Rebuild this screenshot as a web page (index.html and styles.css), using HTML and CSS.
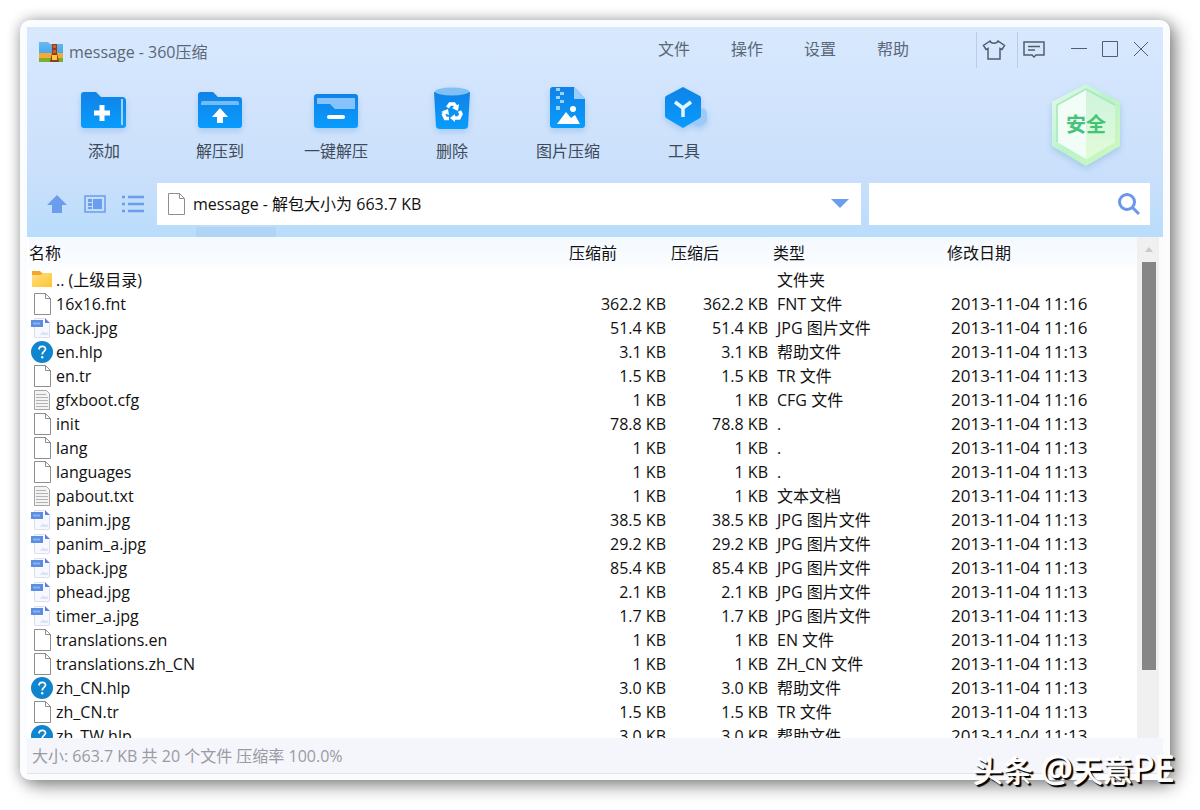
FILE: index.html
```html
<!DOCTYPE html>
<html lang="zh-CN">
<head>
<meta charset="utf-8">
<title>message - 360压缩</title>
<link rel="stylesheet" href="styles.css">
</head>
<body>
<svg class="defs" aria-hidden="true">
  <defs>
    <linearGradient id="blue" x1="0" y1="0" x2="0" y2="1"><stop offset="0" stop-color="#1082e8"/><stop offset="1" stop-color="#089cfc"/></linearGradient>
    <linearGradient id="gold" x1="0" y1="0" x2="1" y2="1"><stop offset="0" stop-color="#ffe08a"/><stop offset="1" stop-color="#ffc42e"/></linearGradient>
    <linearGradient id="rim" x1="0" y1="0" x2="1" y2="1"><stop offset="0" stop-color="#e4fbee"/><stop offset=".5" stop-color="#b9f3c8"/><stop offset="1" stop-color="#d3f8bf"/></linearGradient>
    <linearGradient id="pane" x1="0" y1="0" x2="0" y2="1"><stop offset="0" stop-color="#cdf4dc"/><stop offset="1" stop-color="#e2fbd8"/></linearGradient>
    <linearGradient id="sky" x1="0" y1="0" x2="0" y2="1"><stop offset="0" stop-color="#67b9f2"/><stop offset="1" stop-color="#2e9be8"/></linearGradient>
    <symbol id="i-file" viewBox="0 0 22 24"><path d="M3.500 1.500h11l5 5v16h-16z" fill="#fff" stroke="#8e8e8e"/><path d="M14.500 1.500v5h5" fill="none" stroke="#8e8e8e"/></symbol>
    <symbol id="i-text" viewBox="0 0 22 24"><path d="M3.500 2.500h12l3 3v16h-15z" fill="#f3f3f3" stroke="#a5a5a5"/><path d="M5 6.500h10M5 9.500h12M5 12.500h12M5 15.500h12M5 18.500h12" stroke="#b2b2b2"/></symbol>
    <symbol id="i-jpg" viewBox="0 0 22 24"><path d="M3.500 2.500h10l5 5v14h-15z" fill="#f8f9ff" stroke="#dcdff3"/><path d="M14 2l5 5h-5z" fill="#6b7edc"/><path d="M9 19l3-4 2 2 2-1 2 3z" fill="#dbe2fa"/><rect y="4" width="12" height="7" fill="#5b8ede"/><path d="M2 7.500h7" stroke="#86b2f0" stroke-width="2"/></symbol>
    <symbol id="i-help" viewBox="0 0 22 24"><circle cx="11" cy="12" r="11" fill="#0f84cf"/><path d="M8 9.500c0-4 6.500-4 6.500-.5 0 2.500-3.300 2.500-3.300 5.500" fill="none" stroke="#fff" stroke-width="1.700"/><circle cx="11.200" cy="17.300" r="1.200" fill="#fff"/></symbol>
    <symbol id="i-folder" viewBox="0 0 22 24"><path d="M1 3h8l2 2h10v13H1z" fill="#f5a62c"/><path d="M1 7h9l2-2h9v14H1z" fill="url(#gold)"/></symbol>
  </defs>
</svg>
<main class="window">
  <div class="chrome">
    <header class="titlebar">
      <svg class="appicon" viewBox="0 0 24 20"><path d="M0 0h9l2 2h13v18H0z" fill="url(#sky)"/><path d="M0 11h24v6H0z" fill="#f6a93b"/><path d="M0 16h24v4H0z" fill="#7cae28"/><path d="M13 2h5v9l2 9h-9l2-9z" fill="#8b401d"/><path d="M14 3h3v3h-3zM14 8h3v3h-3z" fill="#dc5926"/><rect x="13" y="13" width="5" height="5" fill="#ffc93c"/></svg>
      <h1>message - 360压缩</h1>
      <nav class="menu"><button>文件</button><button>操作</button><button>设置</button><button>帮助</button></nav>
      <div class="extras">
        <button aria-label="皮肤"><svg viewBox="0 0 24 20" width="24" height="20"><path d="M8 1L1.500 5.500 4 9.500l2-1V19h12V8.500l2 1 2.500-4L16 1c-1 3-7 3-8 0z"/></svg></button>
        <button aria-label="反馈"><svg viewBox="0 0 22 18" width="22" height="18"><path d="M1 1h20v13h-8l-2 2-2-2H1zM5 5.500h12M5 9h7"/></svg></button>
      </div>
      <div class="controls">
        <button aria-label="最小化"><svg viewBox="0 0 16 16"><path d="M0 7.500h16"/></svg></button>
        <button aria-label="最大化"><svg viewBox="0 0 16 16"><path d="M.5.500h15v15H.5z"/></svg></button>
        <button aria-label="关闭"><svg viewBox="0 0 16 16"><path d="M1 1l14 14M15 1L1 15"/></svg></button>
      </div>
    </header>
    <div class="toolbar">
      <button><svg viewBox="0 0 48 48"><path d="M1 8q0-3 3-3h12l5 5h21q4 0 4 4v24q0 3-3 3H4q-3 0-3-3z" fill="url(#blue)"/><path d="M42 12v26" stroke="#9fd3fb" stroke-width="2"/><path d="M14 26h16M22 18v16" stroke="#fff" stroke-width="5"/></svg>添加</button>
      <button><svg viewBox="0 0 48 48"><path d="M2 8q0-3 3-3h12l5 5h21q3 0 3 3v25q0 3-3 3H5q-3 0-3-3z" fill="url(#blue)"/><path d="M5 18v-2q0-2 2-2h34q2 0 2 2v2z" fill="#75bbf7"/><path d="M24 21l8 9h-5v6h-6v-6h-5z" fill="#fff"/></svg>解压到</button>
      <button><svg viewBox="0 0 48 48"><rect x="2" y="7" width="44" height="34" rx="3" fill="url(#blue)"/><path d="M5 11h38v11H23l-5-5H5z" fill="#86c3fa"/><rect x="15" y="28" width="18" height="4" rx="2" fill="#fff"/></svg>一键解压</button>
      <button><svg viewBox="0 0 48 48"><path d="M6 5h36l-2 34q0 3-4 3H12q-4 0-4-3z" fill="url(#blue)"/><ellipse cx="24" cy="4.500" rx="17" ry="4" fill="#82bff5"/><path d="M19.500 20.500l2.500-3.500h4l3 4.500M31.500 24l1.500 3-2 4h-5M21 31.500h-3.500l-2-4 2-3.500" fill="none" stroke="#fff" stroke-width="3.500"/><path d="M31 17l-1 7-6-3zM27 27v8l-5-4zM13 25l7-3 1 6z" fill="#fff"/></svg>删除</button>
      <button><svg viewBox="0 0 48 48"><path d="M6 3q0-3 3-3h21l11 12v26q0 3-3 3H9q-3 0-3-3z" fill="url(#blue)"/><path d="M30 0l11 12H30z" fill="#9ccffb"/><path d="M12 1h4v3h-4zM16 5h4v3h-4zM12 9h4v3h-4zM16 13h4v3h-4zM12 19h4v4h-4z" fill="#9dd2fb"/><path d="M13 37l9-12 5 6 4-3 5 9z" fill="#fff"/><circle cx="29" cy="22" r="3" fill="#fff"/></svg>图片压缩</button>
      <button><svg viewBox="0 0 48 48"><path d="M36 25l8-4 3 4v10l-8 5-8-4z" fill="#9ccbf9"/><path d="M23 0l17 9q1 1 1 2v18q0 1-1 2l-17 10L6 31q-1-1-1-2V11q0-1 1-2z" fill="url(#blue)"/><path d="M15 15l8 6 8-6M23 20v10" fill="none" stroke="#e4f6ff" stroke-width="3.500"/></svg>工具</button>
      <div class="safe"><svg viewBox="0 0 72 84"><path d="M36 1l34 18v44L36 83 2 63V19z" fill="url(#rim)"/><path d="M36 6l29 16v37L36 76 7 59V22z" fill="#f2fdf7"/><path d="M36 6l29 16v37L36 76z" fill="url(#pane)"/><path d="M7 59V22L36 6l29 16" fill="none" stroke="#a5e8bb" stroke-width="1.500"/></svg><span>安全</span></div>
    </div>
    <div class="pathbar">
      <div class="views">
        <button aria-label="上级目录"><svg viewBox="0 0 22 20"><path d="M11 1l10 10h-5v8H6v-8H1z" fill="#6b9ded"/></svg></button>
        <button aria-label="预览"><svg viewBox="0 0 22 20"><path d="M1 2h20v16H1z" fill="none" stroke="#6b9ded" stroke-width="1.500"/><path d="M4 5h4v3H4zM4 9h4v3H4zM4 13h4v2H4zM9 5h9v10H9z" fill="#6b9ded"/></svg></button>
        <button aria-label="列表"><svg viewBox="0 0 22 20"><path d="M0 3h3M0 10h3M0 17h3M6 3h16M6 10h16M6 17h16" stroke="#6b9ded" stroke-width="2.500"/></svg></button>
      </div>
      <label class="address"><svg viewBox="0 0 22 24"><use href="#i-file"/></svg><input type="text" aria-label="路径" value="message - 解包大小为 663.7 KB"><svg class="arrow" viewBox="0 0 18 10"><path d="M0 0h18L9 9z" fill="#6b9cf0"/></svg></label>
      <label class="search"><input type="text" aria-label="搜索"><svg viewBox="0 0 22 22"><circle cx="9" cy="9" r="7.500"/><path d="M14.500 14.500L21 21"/></svg></label>
    </div>
    <div class="tab"></div>
  </div>
  <section class="files">
    <div class="list">
      <table>
        <colgroup><col><col class="c-size"><col class="c-size"><col class="c-type"><col class="c-date"></colgroup>
        <thead><tr><th>名称</th><th>压缩前</th><th>压缩后</th><th>类型</th><th>修改日期</th></tr></thead>
        <tbody id="rows"></tbody>
      </table>
    </div>
    <div class="scroll"><svg viewBox="0 0 10 6"><path d="M5 0l4 5H1z" fill="#c9c9c9"/></svg><div class="thumb"></div></div>
  </section>
  <footer class="status">大小: 663.7 KB 共 20 个文件 压缩率 100.0%</footer>
</main>
<div class="mark">头条 <span>@</span>天意<span>PE</span></div>
<script src="files.js"></script>
</body>
</html>
```

FILE: files.js
```js
const files = [
  ['folder', '.. (上级目录)', '', '文件夹', ''],
  ['file', '16x16.fnt', '362.2 KB', 'FNT 文件', '16'],
  ['jpg', 'back.jpg', '51.4 KB', 'JPG 图片文件', '16'],
  ['help', 'en.hlp', '3.1 KB', '帮助文件', '13'],
  ['file', 'en.tr', '1.5 KB', 'TR 文件', '13'],
  ['text', 'gfxboot.cfg', '1 KB', 'CFG 文件', '16'],
  ['file', 'init', '78.8 KB', '.', '13'],
  ['file', 'lang', '1 KB', '.', '13'],
  ['file', 'languages', '1 KB', '.', '13'],
  ['text', 'pabout.txt', '1 KB', '文本文档', '13'],
  ['jpg', 'panim.jpg', '38.5 KB', 'JPG 图片文件', '13'],
  ['jpg', 'panim_a.jpg', '29.2 KB', 'JPG 图片文件', '13'],
  ['jpg', 'pback.jpg', '85.4 KB', 'JPG 图片文件', '13'],
  ['jpg', 'phead.jpg', '2.1 KB', 'JPG 图片文件', '13'],
  ['jpg', 'timer_a.jpg', '1.7 KB', 'JPG 图片文件', '13'],
  ['file', 'translations.en', '1 KB', 'EN 文件', '13'],
  ['file', 'translations.zh_CN', '1 KB', 'ZH_CN 文件', '13'],
  ['help', 'zh_CN.hlp', '3.0 KB', '帮助文件', '13'],
  ['file', 'zh_CN.tr', '1.5 KB', 'TR 文件', '13'],
  ['help', 'zh_TW.hlp', '3.0 KB', '帮助文件', '13']
];
document.getElementById('rows').innerHTML = files.map(([icon, name, size, type, minute]) => `
  <tr><td><span class="name"><svg viewBox="0 0 22 24"><use href="#i-${icon}"/></svg>${name}</span></td>
  <td>${size}</td><td>${size}</td><td>${type}</td><td>${minute ? '2013-11-04 11:' + minute : ''}</td></tr>`).join('');
```

FILE: styles.css
```css
* { box-sizing: border-box; }
body {
  margin: 0;
  height: 100vh;
  padding: 20px 30px 30px 20px;
  overflow: hidden;
  background: #fff;
  color: #111;
  font: 16px/24px "Open Sans", "Noto Sans CJK SC", sans-serif;
}
button {
  border: 0;
  padding: 0;
  background: none;
  color: inherit;
  font: inherit;
}
svg { display: block; flex: none; }
.defs { position: absolute; width: 0; height: 0; }
.window {
  height: 100%;
  display: flex;
  flex-direction: column;
  padding: 7px 7px 6px;
  border-radius: 10px;
  background: #fbfcfe;
  box-shadow: 0 0 14px rgba(0, 0, 0, .25), 6px 6px 18px rgba(0, 0, 0, .4);
}
.chrome {
  flex: none;
  height: 210px;
  display: flex;
  flex-direction: column;
  background: linear-gradient(#d8e9fe, #cfe2fc 50%, #c8dffb 75%, #b8ddfb);
}
.titlebar {
  height: 50px;
  display: flex;
  align-items: center;
  padding: 0 14px 0 12px;
  color: #5b6776;
}
.appicon { width: 24px; height: 20px; }
h1 { flex: 1; margin: 0 0 0 6px; font-size: 16px; font-weight: 400; }
.menu { display: flex; gap: 41px; margin-right: 67px; padding-bottom: 6px; }
.extras { display: flex; padding-bottom: 4px; }
.extras button {
  width: 41px;
  height: 36px;
  padding-left: 5px;
  border-left: 1px solid #b9cde6;
}
.extras svg, .controls svg { fill: none; stroke: #525e6e; stroke-width: 1.500; }
.controls { display: flex; gap: 15px; margin-left: 13px; padding-bottom: 6px; }
.controls svg { width: 16px; height: 16px; stroke-width: 1; }
.toolbar {
  height: 98px;
  display: flex;
  padding: 10px 41px 0 19px;
  color: #3d4a5a;
}
.toolbar button {
  width: 116px;
  display: flex;
  flex-direction: column;
  align-items: center;
  gap: 4px;
}
.toolbar button svg { width: 48px; height: 48px; overflow: visible; filter: drop-shadow(0 3px 3px #a6c9f0); }
.safe { display: grid; place-items: center; height: 84px; margin: -4px 0 0 auto; }
.safe > * { grid-area: 1 / 1; }
.safe svg { width: 72px; height: 84px; filter: drop-shadow(0 3px 3px #a5c9e8); }
.safe span { color: #43c479; font-size: 20px; font-weight: 700; z-index: 1; }
.pathbar { display: flex; gap: 8px; height: 42px; margin-top: 8px; padding-right: 13px; }
.views { display: flex; align-items: center; gap: 16px; width: 122px; padding-left: 19px; }
.views svg { width: 22px; height: 20px; }
.address, .search { display: flex; align-items: center; background: #fff; }
.address { flex: 1; padding: 0 12px 0 8px; }
.search { width: 281px; padding: 0 10px; }
.tab { width: 80px; height: 10px; margin: 2px 0 0 169px; background: #b0d4f5; }
input { flex: 1; min-width: 0; border: 0; padding: 0; outline: 0; background: none; color: #111; font: inherit; }
.address > svg { width: 22px; height: 24px; margin-right: 6px; }
.address > .arrow { width: 18px; height: 10px; margin: 0; }
.search svg { width: 22px; height: 22px; fill: none; stroke: #6b96ea; stroke-width: 3; }
.files { flex: 1; min-height: 0; display: flex; background: #fff; }
.list { flex: 1; overflow: hidden; padding-left: 2px; }
table { width: 100%; table-layout: fixed; border-collapse: collapse; }
.c-size { width: 102px; }
.c-type { width: 174px; }
.c-date { width: 190px; }
th, td { padding: 0; text-align: left; font-weight: 400; white-space: nowrap; height: 24px; line-height: 24px; }
th { height: 31px; background: linear-gradient(#f4f9ff, #fbfdff); }
td:nth-child(2), td:nth-child(3) { text-align: right; padding-right: 5px; }
td:nth-child(4) { padding-left: 4px; }
td:nth-child(5) { padding-left: 4px; font-size: 17px; }
td:first-child { padding-left: 1px; }
.name { display: flex; align-items: center; gap: 2px; height: 24px; }
.name svg { width: 24px; height: 24px; }
.scroll { flex: none; width: 26px; padding: 10px 7px 0 5px; background: linear-gradient(90deg, #f0f0f0 22px, #fbfbfb 22px); }
.scroll svg { width: 10px; height: 6px; margin: 0 2px 9px; }
.thumb { height: 408px; background: #868686; }
.status {
  flex: none;
  height: 36px;
  padding: 6px 5px;
  border-bottom: 1px solid #e4e4e8;
  background: #f5f5fc;
  color: #989ba2;
}
.mark {
  position: absolute;
  right: 25px;
  bottom: 19px;
  color: #fff;
  font-size: 30px;
  line-height: 40px;
  text-shadow: -1px -1px 1px #fff, 1px 1px 1px #000, 2px 2px 1px #000;
}
.mark span { font-size: 36px; }
```
